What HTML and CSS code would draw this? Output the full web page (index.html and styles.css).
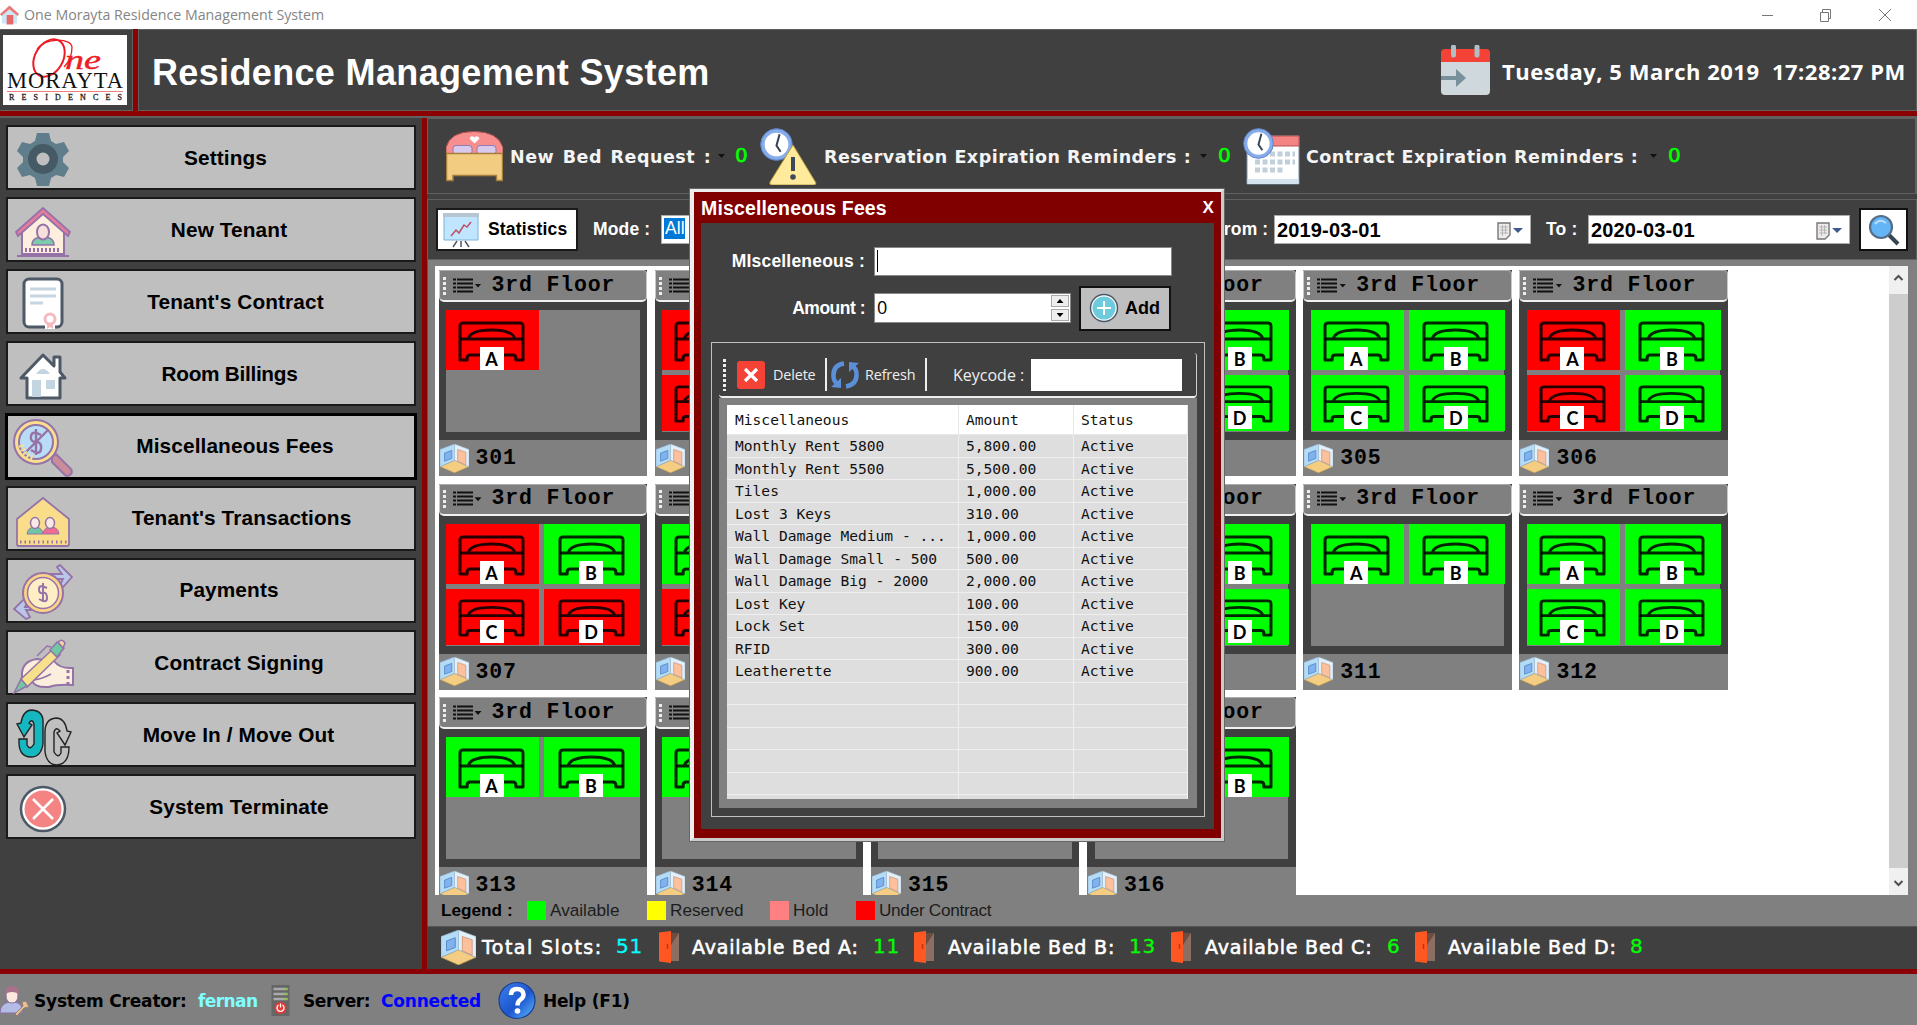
FILE: index.html
```html
<!DOCTYPE html>
<html lang="en">
<head>
<meta charset="utf-8">
<title>One Morayta Residence Management System</title>
<link rel="stylesheet" href="styles.css">
</head>
<body>
<svg class="defs" aria-hidden="true">
  <symbol id="bed" viewBox="0 0 66 41" preserveAspectRatio="none"><g fill="none" stroke="#000" stroke-opacity=".85" stroke-width="3" stroke-linejoin="round"><path d="M2 39V5q0-3 3-3h56q3 0 3 3v34h-7v-2q0-3-3-3H12q-3 0-3 3v2z"/><path d="M2 18h62M10 18Q12 9 33 9T56 18"/></g></symbol>
  <symbol id="cube" viewBox="0 0 32 32" preserveAspectRatio="none"><path d="M16 18L0 25l16 7 16-7z" fill="#f4cd82" stroke="#a98c4b" stroke-width=".7"/><path d="M16 0v18L0 25V6z" fill="#b5dcf7" stroke="#8fb4d0" stroke-width=".6"/><path d="M16 0v18l16 7V6z" fill="#e1f0fb" stroke="#9ab8cc" stroke-width=".6"/><path d="M5 10l8-3v9l-8 3z" fill="#7fb2ee" stroke="#4f7fc0" stroke-width=".8"/><path d="M19.500 6l9 3v14l-9-4z" fill="#fcc09c" stroke="#c98c6c" stroke-width=".7"/></symbol>
  <symbol id="list" viewBox="0 0 20 16"><path d="M0 1.5h3M0 5.5h3M0 9.5h3M0 13.5h3M4 1.5h16M4 5.5h16M4 9.5h16M4 13.5h16" stroke="#111" stroke-width="1.8"/></symbol>
  <symbol id="door" viewBox="0 0 20 32"><path d="M3 2h17v28H3z" fill="#6d4c41"/><path d="M20 2v28h-8V14z" fill="#8d6e63"/><path d="M0 1.500l12-1.500v32L0 30.500z" fill="#ff5722"/><path d="M8.500 13v5" stroke="#bf360c" stroke-width="1.500"/></symbol>
  <symbol id="clock" viewBox="0 0 32 32"><circle cx="16" cy="16" r="13.500" fill="#fff" stroke="#86acea" stroke-width="4"/><circle cx="16" cy="16" r="15.300" fill="none" stroke="#5478c0" stroke-width=".8"/><path d="M19 6l-3 11 4 6" fill="none" stroke="#364454" stroke-width="2"/></symbol>
  <symbol id="cal" viewBox="0 0 26 18"><path d="M1 1h12v12l-4 4H1z" fill="#eee9ea" stroke="#777" stroke-width="1.400"/><path d="M3 5h8M3 8h8M3 11h8M5.500 3v11M8.500 3v9" stroke="#aaa" stroke-width=".8"/><path d="M16 6h10l-5 5z" fill="#3f5a8c"/></symbol>
</svg>

<header class="titlebar">
  <svg class="i-home" viewBox="0 0 20 20"><path d="M2 9v10h16V9l-8-7z" fill="#cfe6f5"/><path d="M0 9L10 0l10 9-1.500 2L10 4 1.500 11z" fill="#e87b7b"/><path d="M7 10h7v10H7z" fill="#e66a6a"/></svg>
  <span>One Morayta Residence Management System</span>
  <svg class="i-win" viewBox="0 0 130 14" fill="none" stroke="#777"><path d="M0 7.500h11M58.500 4.500h8v9h-8zM60.500 4V1.500h8v9H67M117 1l12 12M129 1l-12 12"/></svg>
</header>

<div class="banner">
  <div class="logo">
    <svg viewBox="0 0 124 70"><rect width="124" height="70" fill="#fff"/><g fill="none" stroke="#ee1c25"><ellipse cx="46" cy="23" rx="14" ry="20" transform="rotate(30 46 23)" stroke-width="2"/><path d="M34 14C44 2 68 3 69 12c0 8-2 14-8 20" stroke-width="1.300"/></g><text x="62" y="34" class="lg-one" textLength="36" lengthAdjust="spacingAndGlyphs">ne</text><text x="4" y="53" class="lg-name" textLength="116">MORAYTA</text><path d="M4 56.500h116" stroke="#f08080"/><text x="6" y="65" class="lg-res" textLength="113">RESIDENCES</text></svg>
  </div>
  <div class="banner-main">
    <h1>Residence Management System</h1>
    <svg class="i-date" viewBox="0 0 49 50"><path d="M0 14h49v32q0 4-4 4H4q-4 0-4-4z" fill="#cfd8dc"/><path d="M0 17V8q0-4 4-4h41q4 0 4 4v9z" fill="#f44336"/><path d="M12.500 2v8M36 2v8" stroke="#b0bec5" stroke-width="5" stroke-linecap="round"/><path d="M0 31h15v-7l10 9-10 9v-7H0z" fill="#78909c"/></svg>
    <span class="now">Tuesday, 5 March 2019&nbsp; 17:28:27 PM</span>
  </div>
</div>

<div class="body">
  <nav class="side">
    <button class="b1"><svg viewBox="0 0 62 62"><path d="M25 6h12l2 8 5 3 8-2 5 9-6 6v5l6 6-5 9-8-2-5 3-2 8H25l-2-8-5-3-8 2-5-9 6-6v-5l-6-6 5-9 8 2 5-3z" fill="#607d8b"/><circle cx="31" cy="32" r="15" fill="#455a64"/><circle cx="31" cy="32" r="6.500" fill="#bfbfbf"/></svg><span>Settings</span></button>
    <button class="b2"><svg viewBox="0 0 62 62"><path d="M10 29L31 10l21 19v26H10z" fill="#fdeedd" stroke="#9573a8" stroke-width="2"/><path d="M4 33L31 9l27 24-2 4-25-22L6 37z" fill="#e87c9c" stroke="#9573a8" stroke-width="1.800"/><path d="M20 46q0-8 11-8t11 8z" fill="#7ccbab" stroke="#9573a8" stroke-width="1.500"/><ellipse cx="31" cy="33" rx="6" ry="7.500" fill="#f5e0dc" stroke="#9573a8" stroke-width="2"/><path d="M13 51h36" stroke="#9573a8" stroke-width="4" stroke-dasharray="2 2"/><path d="M5 57h52" stroke="#9573a8" stroke-width="2"/></svg><span>New Tenant</span></button>
    <button class="b3"><svg viewBox="0 0 62 62"><rect x="12" y="8" width="38" height="48" rx="5" fill="#fff" stroke="#4d5966" stroke-width="3"/><path d="M18 18h26M18 25h26M18 32h13" stroke="#c5d5e2" stroke-width="3"/><path d="M33 54h10v4H33z" fill="#fff"/><circle cx="38" cy="48" r="5" fill="#fff" stroke="#f5b9c0" stroke-width="3"/><path d="M35 53h6v5l-3-2-3 2z" fill="#f5b9c0"/></svg><span>Tenant's Contract</span></button>
    <button class="b4"><svg viewBox="0 0 62 62"><path d="M42 23V14h6v15l5 6h-5v20H15V35h-6l22-23z" fill="#fff" stroke="#4d5966" stroke-width="3" stroke-linejoin="round"/><path d="M24 31q7-10 14 0zM20 37h9v17h-9zM34 37h9v9h-9z" fill="#c3d5e0"/></svg><span>Room Billings</span></button>
    <button class="b5 focus"><svg viewBox="0 0 62 62"><path d="M40 41l4-3 15 15q2 4-1 6t-5 0L40 46z" fill="#c98c98" stroke="#9573a8" stroke-width="2"/><circle cx="24" cy="26" r="22" fill="#fadf8c" stroke="#9573a8" stroke-width="2"/><circle cx="24" cy="26" r="17" fill="#b9dcf8" stroke="#9573a8" stroke-width="2"/><path d="M29 19q-9-5-10 1t5 6 5 7-10 1M24 13v26M13 37l23-23" fill="none" stroke="#9573a8" stroke-width="2.400"/><path d="M9 29q3 11 13 13" fill="none" stroke="#fadf8c" stroke-width="5" stroke-dasharray="2 2"/></svg><span>Miscellaneous Fees</span></button>
    <button class="b6"><svg viewBox="0 0 62 62"><path d="M5 31L31 10l26 21v25q0 2-2 2H7q-2 0-2-2z" fill="#f9dd8b" stroke="#9573a8" stroke-width="1.800"/><path d="M15 46q1-7 8-7t8 7z" fill="#6fc7a4" stroke="#9573a8"/><path d="M31 46q1-7 8-7t8 7z" fill="#ef6b93" stroke="#9573a8"/><ellipse cx="23" cy="35" rx="4.500" ry="5.500" fill="#f8e9e6" stroke="#9573a8" stroke-width="1.500"/><ellipse cx="38" cy="35" rx="4.500" ry="5.500" fill="#f8e9e6" stroke="#9573a8" stroke-width="1.500"/><path d="M8 54h48" stroke="#9573a8" stroke-width="3" stroke-dasharray="1.500 3"/></svg><span>Tenant's Transactions</span></button>
    <button class="b7"><svg viewBox="0 0 62 62"><path d="M30 14h20l-5-7 3-2 12 12-9 10-3-2 3-6H32zM32 50H14l4 7-4 2L2 49l10-10 4 2-3 6h18z" fill="#b9c6e8" stroke="#9573a8" stroke-width="1.800"/><circle cx="31" cy="33" r="20" fill="#fbd488" stroke="#9573a8" stroke-width="2"/><circle cx="31" cy="33" r="15.500" fill="#fdeec6" stroke="#9573a8" stroke-width="1.500"/><path d="M35 28q-8-4-8 1t4 4 4 5-8 1M31 23v19" fill="none" stroke="#9573a8" stroke-width="2"/></svg><span>Payments</span></button>
    <button class="b8"><svg viewBox="0 0 62 62"><path d="M10 41q1-12 15-14l17 2q6 8 19 7v17q-16-1-24 2-15 1-17-7l-10 2z" fill="#fbeedd" stroke="#9573a8" stroke-width="2"/><path d="M22 48q8-1 17-6" fill="none" stroke="#9573a8" stroke-width="1.500"/><path d="M9 47L42 16l6 7-33 32z" fill="#f6e08c" stroke="#9573a8" stroke-width="1.500"/><path d="M38 18l7-8 7 6-7 9z" fill="#6fc7a4" stroke="#9573a8" stroke-width="1.500"/><path d="M46 10q4-4 7 1l-2 5z" fill="#fbd4ac" stroke="#9573a8" stroke-width="1.500"/><path d="M9 47l6 7-13 7z" fill="#6fc7a4" stroke="#9573a8" stroke-width="1.500"/><path d="M56 38v15" stroke="#9573a8" stroke-width="3" stroke-dasharray="3 3"/><path d="M25 24l10-10 4 1" fill="none" stroke="#9573a8" stroke-width="1.500"/></svg><span>Contract Signing</span></button>
    <button class="b9"><svg viewBox="0 0 62 62"><path d="M7 35h8v6q3 6 7-1V20q-2-6-5-1l3 2-8 12-7-13 4-1q2-13 11-13 12 1 11 14v20q-2 13-12 13Q6 53 7 35z" fill="#15b7c0" stroke="#222" stroke-width="1.400"/><path d="M57 43h-8v6q-3 6-7-1V28q2-6 6-1l-3 2 8 12 6-13-4-1Q53 14 44 14 33 15 33 28v20q2 13 12 13 12-1 12-18z" fill="none" stroke="#222" stroke-width="1.400"/></svg><span>Move In / Move Out</span></button>
    <button class="b10"><svg viewBox="0 0 62 62"><circle cx="31" cy="33" r="22" fill="#fff" stroke="#4d5966" stroke-width="2.500"/><circle cx="31" cy="33" r="18.500" fill="#f48484"/><path d="M21 23l20 20M41 23L21 43" stroke="#fff" stroke-width="2.600"/></svg><span>System Terminate</span></button>
  </nav>

  <main class="main">
    <section class="alerts">
      <svg class="i-a" viewBox="0 0 57 50"><path d="M0 25V16Q4 0 28 0t29 16v9z" fill="#f98e8e" stroke="#a9504c"/><rect x="7" y="14" width="19" height="9" rx="3" fill="#d9c9ec" stroke="#8e7cb5"/><rect x="31" y="14" width="19" height="9" rx="3" fill="#d9c9ec" stroke="#8e7cb5"/><path d="M28.500 12l-5-5q2-4 5-1 3-3 5 1z" fill="#fff"/><path d="M.5 22h56v27h-6v-5H7v5H.5z" fill="#f2cc80" stroke="#a37e3c" stroke-width="1.400"/></svg>
      <span class="bedreq">New Bed Request :</span><i class="dd"></i><em>0</em>
      <svg class="i-a" viewBox="0 0 57 57"><use href="#clock" width="33" height="33"/><path d="M33 17L56 55q0 2-3 2H12q-3 0-2-3z" fill="#ffeb9b" stroke="#b99c3f"/><path d="M33 29v14" stroke="#3d4a5c" stroke-width="4"/><circle cx="33" cy="49" r="2.800" fill="#3d4a5c"/></svg>
      <span>Reservation Expiration Reminders :</span><i class="dd"></i><em>0</em>
      <svg class="i-a" viewBox="0 0 57 57"><path d="M4 8h52v48H4z" fill="#fff" stroke="#7890a5"/><path d="M4 8h52v10H4z" fill="#f48484" stroke="#b65252"/><path d="M12 26h40M12 34h40M12 42h30" stroke="#c0cfda" stroke-width="5" stroke-dasharray="5 2.500"/><path d="M4.500 51h51v5h-51z" fill="#d5e3ee"/><use href="#clock" width="31" height="31"/></svg>
      <span>Contract Expiration Reminders :</span><i class="dd"></i><em>0</em>
    </section>

    <section class="filters">
      <div class="stat"><svg viewBox="0 0 36 36"><path d="M1 3h34v25H1z" fill="#bfe5ff" stroke="#7fb0d8"/><path d="M0 1h36v4H0z" fill="#b6c5d0"/><path d="M8 24l5-6 3 3 5-8 3 2 4-5" fill="none" stroke="#c05060" stroke-width="1.500"/><path d="M14 29l-4 6M18 29v6M22 29l4 6" stroke="#556" stroke-width="1.500"/></svg><b>Statistics</b></div>
      <b>Mode :</b>
      <div class="combo"><span>All</span></div>
      <b>From :</b>
      <div class="date"><span>2019-03-01</span><svg><use href="#cal"/></svg></div>
      <b>To :</b>
      <div class="date wide"><span>2020-03-01</span><svg><use href="#cal"/></svg></div>
      <div class="find"><svg viewBox="0 0 32 32"><path d="M20 20l10 10" stroke="#37474f" stroke-width="4"/><circle cx="13" cy="13" r="11" fill="#64b5f6" stroke="#546e8a" stroke-width="2.200"/><path d="M7 10q5-6 11-1" fill="none" stroke="#bbdefb" stroke-width="2"/></svg></div>
    </section>

    <section class="board">
      <div class="rooms">
        <div class="cards">
          <article><header><i class="grip"></i><svg><use href="#list"/></svg><i class="dd"></i><b>3rd Floor</b></header><div class="beds"><p class="r a"><svg><use href="#bed"/></svg><b>A</b></p></div><footer><svg><use href="#cube"/></svg><b>301</b></footer></article>
          <article><header><i class="grip"></i><svg><use href="#list"/></svg></header><div class="beds"><p class="r a"><svg><use href="#bed"/></svg></p><p class="r b"></p><p class="r c"><svg><use href="#bed"/></svg></p><p class="r d"></p></div><footer><svg><use href="#cube"/></svg></footer></article>
          <article></article>
          <article><header><i class="grip"></i><svg><use href="#list"/></svg><i class="dd"></i><b>3rd Floor</b></header><div class="beds"><p class="g a"></p><p class="g b"><svg><use href="#bed"/></svg><b>B</b></p><p class="g c"></p><p class="g d"><svg><use href="#bed"/></svg><b>D</b></p></div><footer></footer></article>
          <article><header><i class="grip"></i><svg><use href="#list"/></svg><i class="dd"></i><b>3rd Floor</b></header><div class="beds"><p class="g a"><svg><use href="#bed"/></svg><b>A</b></p><p class="g b"><svg><use href="#bed"/></svg><b>B</b></p><p class="g c"><svg><use href="#bed"/></svg><b>C</b></p><p class="g d"><svg><use href="#bed"/></svg><b>D</b></p></div><footer><svg><use href="#cube"/></svg><b>305</b></footer></article>
          <article><header><i class="grip"></i><svg><use href="#list"/></svg><i class="dd"></i><b>3rd Floor</b></header><div class="beds"><p class="r a"><svg><use href="#bed"/></svg><b>A</b></p><p class="g b"><svg><use href="#bed"/></svg><b>B</b></p><p class="r c"><svg><use href="#bed"/></svg><b>C</b></p><p class="g d"><svg><use href="#bed"/></svg><b>D</b></p></div><footer><svg><use href="#cube"/></svg><b>306</b></footer></article>

          <article><header><i class="grip"></i><svg><use href="#list"/></svg><i class="dd"></i><b>3rd Floor</b></header><div class="beds"><p class="r a"><svg><use href="#bed"/></svg><b>A</b></p><p class="g b"><svg><use href="#bed"/></svg><b>B</b></p><p class="r c"><svg><use href="#bed"/></svg><b>C</b></p><p class="r d"><svg><use href="#bed"/></svg><b>D</b></p></div><footer><svg><use href="#cube"/></svg><b>307</b></footer></article>
          <article><header><i class="grip"></i><svg><use href="#list"/></svg></header><div class="beds"><p class="g a"><svg><use href="#bed"/></svg></p><p class="g b"></p><p class="r c"><svg><use href="#bed"/></svg></p><p class="r d"></p></div><footer><svg><use href="#cube"/></svg></footer></article>
          <article></article>
          <article><header><i class="grip"></i><svg><use href="#list"/></svg><i class="dd"></i><b>3rd Floor</b></header><div class="beds"><p class="g a"></p><p class="g b"><svg><use href="#bed"/></svg><b>B</b></p><p class="g c"></p><p class="g d"><svg><use href="#bed"/></svg><b>D</b></p></div><footer></footer></article>
          <article><header><i class="grip"></i><svg><use href="#list"/></svg><i class="dd"></i><b>3rd Floor</b></header><div class="beds"><p class="g a"><svg><use href="#bed"/></svg><b>A</b></p><p class="g b"><svg><use href="#bed"/></svg><b>B</b></p></div><footer><svg><use href="#cube"/></svg><b>311</b></footer></article>
          <article><header><i class="grip"></i><svg><use href="#list"/></svg><i class="dd"></i><b>3rd Floor</b></header><div class="beds"><p class="g a"><svg><use href="#bed"/></svg><b>A</b></p><p class="g b"><svg><use href="#bed"/></svg><b>B</b></p><p class="g c"><svg><use href="#bed"/></svg><b>C</b></p><p class="g d"><svg><use href="#bed"/></svg><b>D</b></p></div><footer><svg><use href="#cube"/></svg><b>312</b></footer></article>

          <article><header><i class="grip"></i><svg><use href="#list"/></svg><i class="dd"></i><b>3rd Floor</b></header><div class="beds"><p class="g a"><svg><use href="#bed"/></svg><b>A</b></p><p class="g b"><svg><use href="#bed"/></svg><b>B</b></p></div><footer><svg><use href="#cube"/></svg><b>313</b></footer></article>
          <article><header><i class="grip"></i><svg><use href="#list"/></svg></header><div class="beds"><p class="g a"><svg><use href="#bed"/></svg></p><p class="g b"></p></div><footer><svg><use href="#cube"/></svg><b>314</b></footer></article>
          <article><header></header><div class="beds"></div><footer><svg><use href="#cube"/></svg><b>315</b></footer></article>
          <article><header><i class="grip"></i><svg><use href="#list"/></svg><i class="dd"></i><b>3rd Floor</b></header><div class="beds"><p class="g a"></p><p class="g b"><svg><use href="#bed"/></svg><b>B</b></p></div><footer><svg><use href="#cube"/></svg><b>316</b></footer></article>
        </div>
        <div class="scroll"><svg viewBox="0 0 10 8"><path d="M1 6l4-4 4 4" fill="none" stroke="#505050" stroke-width="2"/></svg><div class="thumb"></div><svg viewBox="0 0 10 8"><path d="M1 2l4 4 4-4" fill="none" stroke="#505050" stroke-width="2"/></svg></div>
      </div>
      <div class="legend">
        <b>Legend :</b><i class="sw g"></i><span>Available</span><i class="sw y"></i><span>Reserved</span><i class="sw h"></i><span>Hold</span><i class="sw r"></i><span class="uc">Under Contract</span>
      </div>
    </section>

    <section class="totals">
      <svg class="i-cube"><use href="#cube"/></svg><span class="slots">Total Slots:</span><em class="cy">51</em>
      <svg class="i-door"><use href="#door"/></svg><span>Available Bed A:</span><em>11</em>
      <svg class="i-door"><use href="#door"/></svg><span>Available Bed B:</span><em>13</em>
      <svg class="i-door"><use href="#door"/></svg><span>Available Bed C:</span><em>6</em>
      <svg class="i-door"><use href="#door"/></svg><span>Available Bed D:</span><em>8</em>
    </section>
  </main>
</div>

<footer class="status">
  <svg class="i-user" viewBox="0 0 29 30"><path d="M0 27q0-11 12-11t10 11z" fill="#b3bce4" stroke="#8a6fa8"/><path d="M6 9q0-8 6-8t6 8q0 8-6 8T6 9z" fill="#fbe9dc" stroke="#8a6fa8"/><path d="M5 8q0-8 7-8t7 8q-7-4-14 0z" fill="#a8718c"/><path d="M15 28l8-8-1-4 4-1 3 6-5 1-7 8z" fill="#e8c48a" stroke="#9a7a80"/></svg>
  <b>System Creator:</b><b class="who">fernan</b>
  <svg class="i-srv" viewBox="0 0 18 31"><rect width="18" height="31" fill="#666"/><path d="M2 4h14M2 9h14M2 14h14" stroke="#aaa" stroke-width="2.500"/><path d="M13 4h3M13 9h3M13 14h3" stroke="#8bc34a" stroke-width="2"/><circle cx="9" cy="23" r="6" fill="#e53935"/><path d="M7 20a3.500 3.500 0 1 0 4 0M9 18.500v4" fill="none" stroke="#fff" stroke-width="1.300"/></svg>
  <b class="srv">Server:</b><b class="conn">Connected</b>
  <svg class="i-help" viewBox="0 0 38 39"><defs><linearGradient id="hg" x1="0" y1="0" x2="1" y2="1"><stop offset="0" stop-color="#3f7fe8"/><stop offset=".55" stop-color="#1c56cf"/><stop offset="1" stop-color="#5fbcff"/></linearGradient></defs><circle cx="19" cy="19.500" r="18" fill="url(#hg)" stroke="#1a3f8f" stroke-width="1.200"/><path d="M13 14q0-6 6-6t6.500 5.500q0 3-3 5t-3 6" fill="none" stroke="#fff" stroke-width="4.500"/><circle cx="19.500" cy="30" r="2.800" fill="#fff"/></svg>
  <b>Help (F1)</b>
</footer>

<div class="dialog">
  <div class="dlg-head"><b>Miscelleneous Fees</b><span>X</span></div>
  <div class="dlg-body">
    <div class="form">
      <label>MIscelleneous :</label><div class="inp"><i></i></div>
    </div>
    <div class="form two">
      <label>Amount :</label><div class="spin"><span>0</span><div class="ud"><i class="up"></i><i class="dn"></i></div></div>
      <div class="add"><svg viewBox="0 0 30 30"><circle cx="15" cy="15" r="13.500" fill="#fff" stroke="#4d5966" stroke-width="1.500"/><circle cx="15" cy="15" r="11.500" fill="#6ecbdd"/><path d="M15 8v14M8 15h14" stroke="#fff" stroke-width="2"/></svg><b>Add</b></div>
    </div>
    <div class="group">
      <div class="tools">
        <i class="grip"></i>
        <svg class="i-del" viewBox="0 0 28 28"><rect width="28" height="28" rx="3" fill="#f44336"/><path d="M8 8l12 12M20 8L8 20" stroke="#fff" stroke-width="3.200"/></svg><span>Delete</span><i class="sep"></i>
        <svg class="i-ref" viewBox="0 0 28 28"><g fill="none" stroke="#5b8fd8" stroke-width="4.500"><path d="M13 2.500Q2 4 2.500 15q0 5 4 8"/><path d="M15 25.500q11-2 10.500-12.500 0-5-4-8"/></g><path d="M0 26l10 1V17zM28 2l-10-1v10z" fill="#5b8fd8"/></svg><span>Refresh</span><i class="sep"></i>
        <span class="kc">Keycode :</span><div class="key"></div>
      </div>
      <div class="tablewrap">
        <table>
          <tr><th>Miscellaneous</th><th>Amount</th><th>Status</th></tr>
          <tr><td>Monthly Rent 5800</td><td>5,800.00</td><td>Active</td></tr>
          <tr><td>Monthly Rent 5500</td><td>5,500.00</td><td>Active</td></tr>
          <tr><td>Tiles</td><td>1,000.00</td><td>Active</td></tr>
          <tr><td>Lost 3 Keys</td><td>310.00</td><td>Active</td></tr>
          <tr><td>Wall Damage Medium - ...</td><td>1,000.00</td><td>Active</td></tr>
          <tr><td>Wall Damage Small - 500</td><td>500.00</td><td>Active</td></tr>
          <tr><td>Wall Damage Big - 2000</td><td>2,000.00</td><td>Active</td></tr>
          <tr><td>Lost Key</td><td>100.00</td><td>Active</td></tr>
          <tr><td>Lock Set</td><td>150.00</td><td>Active</td></tr>
          <tr><td>RFID</td><td>300.00</td><td>Active</td></tr>
          <tr><td>Leatherette</td><td>900.00</td><td>Active</td></tr>
          <tr><td></td><td></td><td></td></tr><tr><td></td><td></td><td></td></tr><tr><td></td><td></td><td></td></tr><tr><td></td><td></td><td></td></tr><tr><td></td><td></td><td></td></tr><tr><td></td><td></td><td></td></tr>
        </table>
      </div>
    </div>
  </div>
</div>
</body>
</html>
```
FILE: styles.css
```css
* { box-sizing: border-box; }
body { margin: 0; width: 1917px; height: 1025px; overflow: hidden; background: #404040; font-family: "Liberation Sans", sans-serif; color: #fff; display: flex; flex-direction: column; position: relative; }
svg { display: block; }
em, i { font-style: normal; }
p, h1 { margin: 0; }
.defs { position: absolute; width: 0; height: 0; }
span, b, em, label, h1 { white-space: nowrap; }

.titlebar { height: 29px; background: #fff; display: flex; align-items: center; flex: none; font: 14.200px "Open Sans", sans-serif; color: #858585; }
.i-home { width: 19px; height: 20px; margin-right: 5px; }
.titlebar span { flex: 1; }
.i-win { width: 130px; height: 14px; margin-right: 25px; }

.banner { height: 89px; flex: none; display: grid; grid-template-columns: 133px 1fr; column-gap: 5px; background: #8b0000; border-bottom: 2px solid #606060; padding-bottom: 5px; }
.logo { background: #404040; border: 1px solid #606060; border-left: 0; padding: 5px 0 0 3px; }
.logo svg { width: 124px; height: 70px; }
.lg-one { font: italic 28px "Liberation Serif", serif; fill: #ee1c25; stroke: #ee1c25; stroke-width: .4; }
.lg-name { font: 22.500px "Liberation Serif", serif; fill: #111; }
.lg-res { font: 8px "Liberation Serif", serif; fill: #222; stroke: #222; stroke-width: .3; }
.banner-main { background: #404040; border: 1px solid #606060; display: grid; grid-template-columns: 1289px 61px 1fr; padding-left: 13px; align-items: center; }
h1 { font-size: 36px; line-height: 40px; padding-top: 5px; letter-spacing: .350px; }
.i-date { width: 49px; height: 50px; }
.now { font: bold 22px "Open Sans", sans-serif; letter-spacing: .500px; padding-top: 1px; }

.body { height: 851px; flex: none; display: grid; grid-template-columns: 422px 1fr; column-gap: 5px; background: #8b0000; }
.side { background: #404040; padding: 7px 6px; display: flex; flex-direction: column; gap: 7.150px; }
.side button { height: 65px; flex: none; width: 410px; background: #bfbfbf; border: 2px solid #1a1a1a; padding: 0; display: grid; align-items: center; justify-items: center; color: #000; font: bold 20.800px "Liberation Sans", sans-serif; letter-spacing: .120px; }
.side button.focus { border: 2px solid #000; outline: 1px solid #000; }
.side svg, .side span { grid-area: 1 / 1; }
.side svg { width: 62px; height: 62px; justify-self: start; margin-left: 4px; }
.b1 span { margin-left: 29px; } .b2 span { margin-left: 36px; } .b3 span { margin-left: 49px; } .b4 span { margin-left: 37px; letter-spacing: -.300px; } .b5 span { margin-left: 48px; }
.b6 span { margin-left: 61px; } .b7 span { margin-left: 36px; } .b8 span { margin-left: 56px; } .b9 span { margin-left: 55px; } .b10 span { margin-left: 56px; }
.b5 span, .b6 span, .b7 span { padding-bottom: 2px; }

.main { background: #404040; display: flex; flex-direction: column; min-width: 0; }
.dd { width: 7px; height: 4px; background: #111; clip-path: polygon(0 0, 100% 0, 50% 100%); }
.alerts { height: 76px; flex: none; border: 1px solid #606060; border-right: 2px solid #606060; display: grid; align-items: center; padding-left: 18px; grid-template-columns: 64px 208px 17px 25px 64px 376px 18px 25px 63px 344px 18px 25px; font: bold 17.500px "DejaVu Sans", sans-serif; letter-spacing: .500px; color: #f4f4f4; }
.i-a { width: 57px; height: 57px; }
.alerts em { font: 20px "DejaVu Sans", sans-serif; color: #0f0; -webkit-text-stroke: .600px #0f0; padding-bottom: 2px; }
.alerts span { padding-top: 2px; }
.bedreq { word-spacing: 2px; }

.filters { height: 61px; flex: none; margin-top: 5px; border: 1px solid #606060; display: grid; align-items: center; grid-template-columns: 157px 68px 552px 61px 272px 42px 271px 49px; padding-left: 8px; font-size: 17.500px; letter-spacing: .150px; }
.stat { width: 142px; height: 43px; background: #fff; border: 2px solid #1a1a1a; color: #000; display: flex; align-items: center; padding-left: 5px; gap: 9px; }
.stat svg { width: 36px; height: 36px; }
.combo { width: 140px; height: 29px; background: #fff; border: 1px solid #aaa; padding: 2px; color: #fff; }
.combo span { background: #0078d7; display: inline-block; line-height: 21px; padding-left: 1px; }
.date { height: 29px; width: 257px; background: #fff; border: 1px solid #aaa; display: flex; align-items: center; justify-content: space-between; color: #000; font-size: 20px; font-weight: bold; padding: 2px 7px 0 2px; }
.date.wide { width: 262px; }
.date svg { width: 26px; height: 18px; }
.find { width: 49px; height: 43px; background: #fff; border: 2px solid #111; display: grid; place-items: center; }
.find svg { width: 34px; height: 32px; }

.board { flex: 1; background: #808080; display: flex; flex-direction: column; padding: 6px 9px 0 7px; border-left: 1px solid #555; min-height: 0; }
.rooms { height: 629px; flex: none; background: #fff; display: flex; justify-content: space-between; }
.cards { height: 629px; overflow: hidden; display: grid; grid-template-columns: repeat(6, 208.500px); column-gap: 7.700px; row-gap: 7.500px; grid-auto-rows: 206.200px; padding: 4px 0 0 3.500px; }
article { background: #404040; display: flex; flex-direction: column; color: #000; }
article header { height: 32px; background: #808080; border: 1px solid #c8c8c8; border-bottom: 2px solid #f0f0f0; border-top-color: #aaa; border-radius: 0 4px 5px 5px; display: grid; grid-template-columns: 10px 22px 17px 1fr; padding-left: 3px; align-items: center; }
.grip { width: 3px; height: 18px; background: repeating-linear-gradient(#eee 0 3px, transparent 3px 5px); }
article header svg { width: 20px; height: 16px; }
article header b, article footer b { font: bold 21.500px "Liberation Mono", monospace; letter-spacing: .850px; }
article header b { padding-bottom: 2px; }
.beds { width: 193.500px; height: 122px; margin: 8px 0 8px 7.500px; background: #808080; display: grid; grid-template-columns: 93px 96px; grid-template-rows: 60px 56px; gap: 5px; flex: none; }
.beds p { display: grid; justify-items: center; align-items: end; padding-right: 2px; }
.beds p.g, .sw.g { background: #0f0; }
.beds p.r, .sw.r { background: #f00; }
.beds svg, .beds b { grid-area: 1 / 1; }
.beds svg { width: 67px; height: 41px; margin-bottom: 8px; }
.beds .c svg, .beds .d svg { height: 38px; }
.beds .c b, .beds .d b { margin-bottom: 2px; }
.beds b { width: 24px; height: 23px; background: #fff; font: bold 18px/24px "Lato", sans-serif; text-align: center; }
article footer { flex: 1; background: #808080; display: flex; align-items: center; gap: 7px; padding-left: 1px; }
article footer svg { width: 29px; height: 29px; }
.scroll { width: 19px; background: #f0f0f0; display: flex; flex-direction: column; align-items: center; justify-content: space-between; padding: 8px 0; }
.scroll svg { width: 11px; height: 8px; }
.scroll .thumb { width: 19px; height: 574px; background: #cdcdcd; }
.legend { height: 29px; display: grid; align-items: center; grid-template-columns: 86px 23px 97px 23px 100px 23px 62.500px 23.500px 1fr; padding-left: 6px; color: #000; font-size: 17.200px; margin-top: 1px; }
.legend span { color: #1c1c1c; }
.legend .uc { letter-spacing: -.300px; }
.sw { width: 19px; height: 19px; }
.sw.y { background: #ff0; } .sw.h { background: #ff8080; }

.totals { height: 43px; flex: none; border-top: 1px solid #555; display: grid; align-items: center; padding-left: 14px; grid-template-columns: 41px 134px 43px 33px 181px 41px 34px 181px 42px 34px 182px 28px 33px 182px 1fr; font: 19px "DejaVu Sans", sans-serif; letter-spacing: .800px; padding-bottom: 2px; }
.totals span { -webkit-text-stroke: .600px #fff; }
.totals .slots { letter-spacing: 1.450px; }
.totals em { color: #0f0; font-size: 20px; padding-bottom: 3px; -webkit-text-stroke: .300px #0f0; }
.totals em.cy { color: #0ff; -webkit-text-stroke-color: #0ff; }
.i-cube { width: 35px; height: 35px; }
.i-door { width: 20px; height: 32px; }

.status { height: 56px; flex: none; border-top: 5px solid #8b0000; background: #808080; display: grid; align-items: center; grid-template-columns: 34px 164px 73px 32px 78px 117px 45px 1fr; padding-top: 2px; color: #000; font: bold 17px "DejaVu Sans", sans-serif; letter-spacing: -.200px; }
.who { color: #80ffff; letter-spacing: -.600px; } .conn { color: #00f; } .srv { letter-spacing: -.400px; }
.i-user { width: 29px; height: 30px; } .i-srv { width: 19px; height: 31px; } .i-help { width: 38px; height: 39px; }

.dialog { position: absolute; left: 690px; top: 189px; width: 534px; height: 652px; background: #800000; border: 3px solid #eee; border-left-width: 4px; border-bottom-color: #ccc; border-right-color: #ccc; outline: 1px solid #666; padding: 1px 7px 9px; display: flex; flex-direction: column; }
.dlg-head { height: 30px; display: flex; justify-content: space-between; align-items: center; font-size: 19.500px; font-weight: bold; letter-spacing: .150px; }
.dlg-head span { font-size: 17px; }
.dlg-body { flex: 1; background: #404040; padding: 24px 9px 12px 10px; display: flex; flex-direction: column; min-height: 0; }
.form { display: grid; grid-template-columns: 154px 298px; column-gap: 9px; align-items: center; height: 29px; font-size: 17.500px; font-weight: bold; }
.form label { justify-self: end; letter-spacing: .200px; }
.inp { height: 29px; background: #fff; border: 1px solid #888; padding: 2px; }
.inp i { display: block; width: 1px; height: 22px; background: #000; }
.form.two { grid-template-columns: 154px 197px 92px; height: 46px; margin: 9px 0 11px; }
.form.two label { letter-spacing: -.500px; }
.spin { height: 30px; background: #fff; border: 1px solid #888; color: #000; font: 18px "Open Sans", sans-serif; display: flex; justify-content: space-between; padding: 1px 1px 1px 2px; }
.ud { width: 18px; display: grid; gap: 2px; }
.ud i { background: #eee; border: 1px solid #aaa; display: grid; place-items: center; }
.ud i::before { content: ""; width: 7px; height: 4px; background: #000; clip-path: polygon(50% 0, 100% 100%, 0 100%); }
.ud .dn::before { clip-path: polygon(0 0, 100% 0, 50% 100%); }
.add { height: 45px; margin-left: -1px; width: 92px; background: #bfbfbf; border: 2px solid #111; color: #000; display: flex; align-items: center; gap: 6px; padding-left: 8px; font-size: 18px; }
.add svg { width: 30px; height: 30px; }
.group { border: 1px solid #c0c0c0; flex: 1; padding: 10px 7px 8px; display: flex; flex-direction: column; min-height: 0; }
.tools { height: 45px; flex: none; border-right: 1px solid #ccc; border-bottom: 2px solid #eee; border-radius: 0 3px 4px 4px; display: grid; align-items: center; grid-template-columns: 14px 36px 52px 6px 34px 60px 28px 78px 151px; padding-left: 4px; font: 14.400px "Open Sans", sans-serif; letter-spacing: -.150px; color: #eee; }
.tools .kc { font-size: 16px; letter-spacing: 0; }
.tools .grip { height: 32px; }
.i-del, .i-ref { width: 28px; height: 28px; }
.sep { width: 2px; height: 33px; background: #eee; }
.key { height: 32px; background: #fff; }
.tablewrap { flex: 1; background: #808080; padding: 7px 8px 10px; min-height: 0; }
table { width: 461px; height: 394px; display: block; overflow: hidden; background: #dedede; border-collapse: collapse; font: 14.600px "DejaVu Sans Mono", monospace; color: #111; }
tr { display: grid; grid-template-columns: 232px 115px 114px; height: 22.500px; }
tr:first-child { height: 30px; }
th, td { padding: 0 0 0 7px; font-weight: normal; text-align: left; line-height: 21px; white-space: pre; border-right: 1px solid #f0f0f0; border-bottom: 1px solid #efefef; }
th:first-child, td:first-child { padding-left: 8px; }
th { background: #fff; line-height: 29px; border-color: #e8e8e8; }
```
